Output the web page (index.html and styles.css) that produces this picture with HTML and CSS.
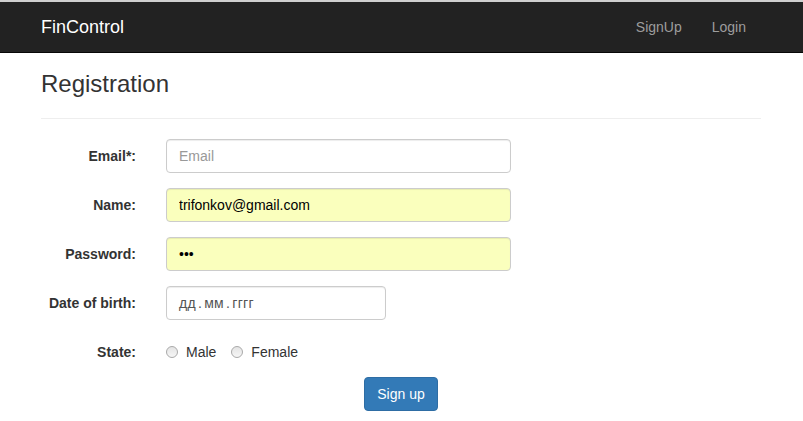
FILE: index.html
```html
<!DOCTYPE html>
<html lang="en">
<head>
<meta charset="utf-8">
<title>FinControl - Registration</title>
<link rel="stylesheet" href="styles.css">
</head>
<body>
<nav class="navbar">
  <div class="container nav-inner">
    <a class="brand" href="#">FinControl</a>
    <ul class="nav-links">
      <li><a href="#">SignUp</a></li>
      <li><a href="#">Login</a></li>
    </ul>
  </div>
</nav>
<main class="container">
  <h3 class="page-title">Registration</h3>
  <form class="form">
    <div class="row">
      <label class="label">Email*:</label>
      <div class="field wide"><input class="input" type="text" placeholder="Email"></div>
    </div>
    <div class="row">
      <label class="label">Name:</label>
      <div class="field wide"><input class="input autofill" type="text" value="trifonkov@gmail.com"></div>
    </div>
    <div class="row">
      <label class="label">Password:</label>
      <div class="field wide"><input class="input autofill" type="password" value="abc"></div>
    </div>
    <div class="row">
      <label class="label">Date of birth:</label>
      <div class="field narrow"><div class="input date">дд<span class="sep">.</span>мм<span class="sep">.</span>гггг</div></div>
    </div>
    <div class="row radio-row">
      <label class="label">State:</label>
      <div class="radios">
        <label class="radio"><span class="dot"></span>Male</label>
        <label class="radio"><span class="dot"></span>Female</label>
      </div>
    </div>
    <div class="actions">
      <button class="btn" type="button">Sign up</button>
    </div>
  </form>
</main>
</body>
</html>
```
FILE: styles.css
```css
* { box-sizing: border-box; }
html, body { margin: 0; padding: 0; }
body {
  font-family: "Liberation Sans", Arial, Helvetica, sans-serif;
  font-size: 14px;
  line-height: 20px;
  color: #333;
  background: #fff;
  border-top: 2px solid #cfcfcf;
}
.container {
  width: 750px;
  margin: 0 auto;
  margin-left: max(0px, calc((100% - 751px) / 2));
  padding: 0 15px;
}
.navbar {
  background: #222;
  border-bottom: 1px solid #080808;
  height: 51px;
}
.nav-inner {
  display: flex;
  justify-content: space-between;
  align-items: center;
  height: 50px;
}
.brand {
  color: #fff;
  font-size: 18px;
  line-height: 20px;
  text-decoration: none;
}
.nav-links {
  list-style: none;
  margin: 0;
  padding: 0;
  display: flex;
}
.nav-links a {
  display: block;
  padding: 15px;
  color: #9d9d9d;
  text-decoration: none;
}

.page-title {
  font-size: 24px;
  font-weight: 500;
  line-height: 26px;
  margin: 18px 0 0;
  padding-bottom: 21px;
  border-bottom: 1px solid #eee;
}
.form { padding-top: 20px; }
.row {
  display: flex;
  margin: 0 -15px 15px;
}
.label {
  width: 125px;
  padding: 7px 15px 0;
  text-align: right;
  font-weight: bold;
}
.field { padding: 0 15px; }
.wide { width: 375px; }
.narrow { width: 250px; }
.input {
  display: block;
  width: 100%;
  height: 34px;
  padding: 6px 12px;
  font-family: inherit;
  font-size: 14px;
  line-height: 20px;
  color: #555;
  background: #fff;
  border: 1px solid #ccc;
  border-radius: 4px;
  box-shadow: inset 0 1px 1px rgba(0,0,0,.075);
}
.input::placeholder { color: #999; }
.autofill {
  background: #faffbd;
  color: #000;
}
.date {
  color: #555;
  letter-spacing: 0.3px;
}
.sep { margin: 0 2px; }
.radio-row { margin-bottom: 15px; }
.radios {
  display: flex;
  padding: 7px 15px 0;
  gap: 15px;
}
.radio {
  display: flex;
  align-items: center;
  color: #333;
}
.dot {
  width: 12px;
  height: 12px;
  border-radius: 50%;
  border: 1px solid #a9a9a9;
  background: linear-gradient(#e4e4e4, #f6f6f6);
  margin-right: 8px;
}
.actions {
  display: flex;
  justify-content: center;
}
.btn {
  font-family: inherit;
  font-size: 14px;
  line-height: 20px;
  padding: 6px 12px;
  color: #fff;
  background: #337ab7;
  border: 1px solid #2e6da4;
  border-radius: 4px;
  height: 34px;
  width: 74px;
}
```
